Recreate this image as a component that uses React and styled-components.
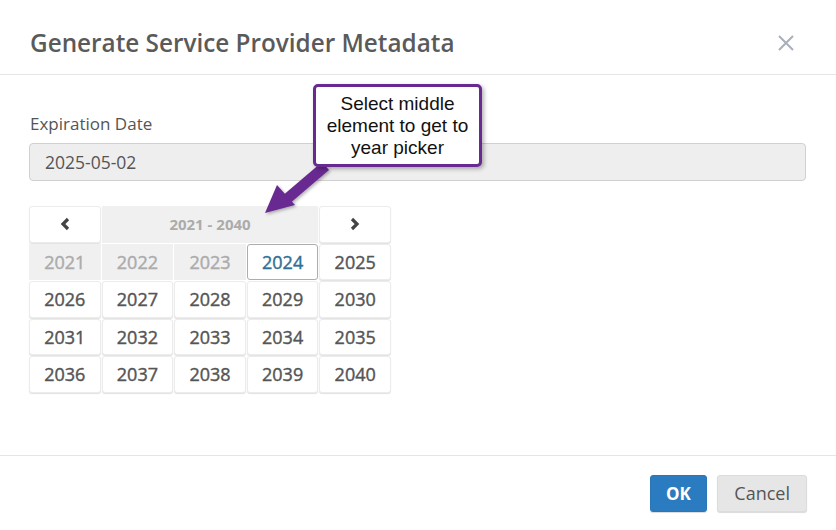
import React from 'react';
import styled, { createGlobalStyle } from 'styled-components';

const GlobalStyle = createGlobalStyle`
  html, body {
    margin: 0;
    padding: 0;
    background: #fff;
  }
  body {
    font-family: "Open Sans", "Noto Sans", sans-serif;
    color: #555;
  }
`;

const Modal = styled.div`
  position: relative;
  width: 836px;
  height: 530px;
  background: #fff;
  display: flex;
  flex-direction: column;
  overflow: hidden;
`;

const Header = styled.div`
  height: 75px;
  box-sizing: border-box;
  border-bottom: 1px solid #e5e5e5;
  display: flex;
  align-items: center;
  justify-content: space-between;
  padding: 11px 41px 0 30px;
`;

const Title = styled.h4`
  margin: 0;
  font-size: 24.3px;
  font-weight: 600;
  color: #5a5a5a;
`;

const CloseButton = styled.button`
  border: none;
  background: none;
  padding: 0;
  width: 18px;
  height: 18px;
  display: flex;
  align-items: center;
  justify-content: center;
  cursor: pointer;
`;

const Body = styled.div`
  flex: 1;
  padding: 38px 30px 0 29px;
`;

const Label = styled.label`
  display: block;
  font-size: 17px;
  line-height: 22px;
  color: #555;
  margin-bottom: 8px;
  padding-left: 1px;
`;

const DateInput = styled.input`
  display: block;
  width: 100%;
  box-sizing: border-box;
  height: 38px;
  border: 1px solid #d0d0d0;
  border-radius: 4px;
  background: #eeeeee;
  padding: 0 15px;
  font-family: inherit;
  font-size: 17.5px;
  color: #555;
  outline: none;
`;

const Picker = styled.div`
  margin-top: 25px;
  width: 362px;
  display: grid;
  grid-template-columns: repeat(5, 1fr);
  grid-auto-rows: 36.5px;
  gap: 1px;
`;

const Cell = styled.button`
  box-sizing: border-box;
  border: 1px solid ${(p) => (p.active ? '#adadad' : p.muted ? 'transparent' : '#ececec')};
  border-radius: ${(p) => (p.muted ? '0' : '3px')};
  background: ${(p) => (p.muted ? '#f0f0f0' : '#fff')};
  box-shadow: ${(p) => (p.muted || p.active ? 'none' : '0 1px 1px rgba(0,0,0,0.12)')};
  font-family: inherit;
  font-size: ${(p) => (p.small ? '15px' : '18px')};
  font-weight: ${(p) => (p.small ? 700 : 400)};
  -webkit-text-stroke: ${(p) => (p.small ? '0' : '0.4px')};
  color: ${(p) => (p.active ? '#2f6f96' : p.muted ? '#ababab' : '#555')};
  grid-column: ${(p) => (p.span ? `span ${p.span}` : 'auto')};
  display: flex;
  align-items: center;
  justify-content: center;
  padding: 0;
  cursor: pointer;
`;

const Footer = styled.div`
  height: 75px;
  box-sizing: border-box;
  border-top: 1px solid #e5e5e5;
  display: flex;
  align-items: center;
  justify-content: flex-end;
  gap: 10px;
  padding: 0 29px 0 0;
`;

const Button = styled.button`
  height: 37px;
  box-sizing: border-box;
  padding: 0 ${(p) => (p.primary ? '15.5px' : '16px')};
  border-radius: 3px;
  border: 1px solid ${(p) => (p.primary ? '#2a77b8' : '#dcdcdc')};
  background: ${(p) => (p.primary ? '#2b7bc0' : '#e6e6e6')};
  color: ${(p) => (p.primary ? '#fff' : '#555')};
  font-family: inherit;
  font-size: ${(p) => (p.primary ? '17px' : '18px')};
  font-weight: ${(p) => (p.primary ? 700 : 400)};
  box-shadow: 0 1px 1px rgba(0,0,0,0.15);
  cursor: pointer;
`;

const Callout = styled.div`
  position: absolute;
  left: 313px;
  top: 84px;
  width: 169px;
  height: 83px;
  box-sizing: border-box;
  border: 3px solid #682a91;
  border-radius: 5px;
  background: #fff;
  box-shadow: 2px 2px 4px rgba(0,0,0,0.3);
  display: flex;
  align-items: center;
  justify-content: center;
  text-align: center;
  font-family: "Liberation Sans", Arial, sans-serif;
  font-size: 19px;
  line-height: 22px;
  color: #111;
  white-space: nowrap;
  z-index: 2;
`;

const ArrowSvg = styled.svg`
  position: absolute;
  left: 0;
  top: 0;
  width: 836px;
  height: 530px;
  pointer-events: none;
  z-index: 1;
`;

const years = Array.from({ length: 20 }, (_, i) => 2021 + i);

export default function App() {
  return (
    <>
      <GlobalStyle />
      <Modal>
        <Header>
          <Title>Generate Service Provider Metadata</Title>
          <CloseButton aria-label="Close">
            <svg width="18" height="18" viewBox="0 0 18 18">
              <path d="M2 2 L16 16 M16 2 L2 16" stroke="#a8b0bb" strokeWidth="2" />
            </svg>
          </CloseButton>
        </Header>
        <Body>
          <Label>Expiration Date</Label>
          <DateInput value="2025-05-02" readOnly />
          <Picker>
            <Cell>
              <svg width="10" height="14" viewBox="0 0 10 14">
                <path d="M8 2 L3 7 L8 12" fill="none" stroke="#444" strokeWidth="3.2" />
              </svg>
            </Cell>
            <Cell span={3} muted small>2021 - 2040</Cell>
            <Cell>
              <svg width="10" height="14" viewBox="0 0 10 14">
                <path d="M2 2 L7 7 L2 12" fill="none" stroke="#444" strokeWidth="3.2" />
              </svg>
            </Cell>
            {years.map((y) => (
              <Cell key={y} muted={y < 2024} active={y === 2024}>
                {y}
              </Cell>
            ))}
          </Picker>
        </Body>
        <Footer>
          <Button primary>OK</Button>
          <Button>Cancel</Button>
        </Footer>
        <ArrowSvg viewBox="0 0 836 530">
          <defs>
            <filter id="sh" x="-20%" y="-20%" width="140%" height="140%">
              <feDropShadow dx="1.5" dy="1.5" stdDeviation="1.5" floodOpacity="0.3" />
            </filter>
          </defs>
          <g filter="url(#sh)" fill="#682a91">
            <path d="M322 162 L329 170 L288 205 L281 197 Z" />
            <path d="M265 213 L277 185 L295 205 Z" />
          </g>
        </ArrowSvg>
        <Callout>
          Select middle
          <br />
          element to get to
          <br />
          year picker
        </Callout>
      </Modal>
    </>
  );
}
